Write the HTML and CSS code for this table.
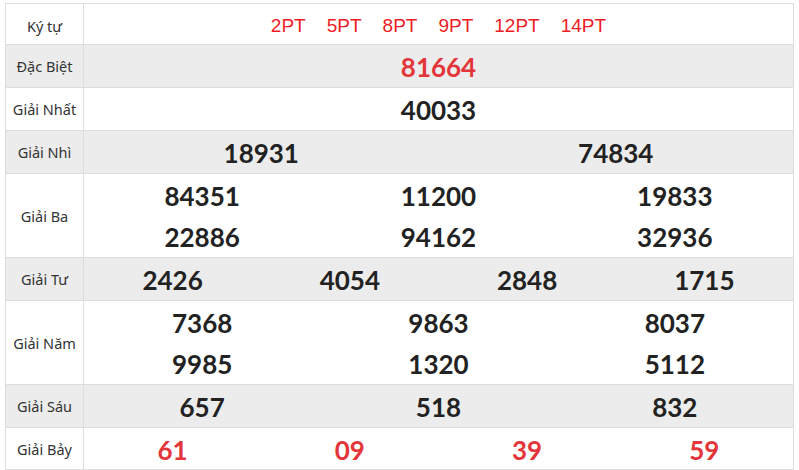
FILE: index.html
```html
<!DOCTYPE html>
<html lang="vi">
<head>
<meta charset="utf-8">
<link rel="stylesheet" href="styles.css">
</head>
<body>
<table class="kq">
  <colgroup><col class="c-label"><col></colgroup>
  <tr class="r-head">
    <td class="lbl">Ký tự</td>
    <td class="pts"><span>2PT</span><span>5PT</span><span>8PT</span><span>9PT</span><span>12PT</span><span>14PT</span></td>
  </tr>
  <tr class="gray">
    <td class="lbl">Đặc Biệt</td>
    <td><div class="g g1"><span class="n red">81664</span></div></td>
  </tr>
  <tr>
    <td class="lbl">Giải Nhất</td>
    <td><div class="g g1"><span class="n">40033</span></div></td>
  </tr>
  <tr class="gray">
    <td class="lbl">Giải Nhì</td>
    <td><div class="g g2"><span class="n">18931</span><span class="n">74834</span></div></td>
  </tr>
  <tr class="dbl">
    <td class="lbl">Giải Ba</td>
    <td><div class="g g3"><span class="n">84351</span><span class="n">11200</span><span class="n">19833</span><span class="n">22886</span><span class="n">94162</span><span class="n">32936</span></div></td>
  </tr>
  <tr class="gray">
    <td class="lbl">Giải Tư</td>
    <td><div class="g g4"><span class="n">2426</span><span class="n">4054</span><span class="n">2848</span><span class="n">1715</span></div></td>
  </tr>
  <tr class="dbl">
    <td class="lbl">Giải Năm</td>
    <td><div class="g g3"><span class="n">7368</span><span class="n">9863</span><span class="n">8037</span><span class="n">9985</span><span class="n">1320</span><span class="n">5112</span></div></td>
  </tr>
  <tr class="gray">
    <td class="lbl">Giải Sáu</td>
    <td><div class="g g3"><span class="n">657</span><span class="n">518</span><span class="n">832</span></div></td>
  </tr>
  <tr class="last">
    <td class="lbl">Giải Bảy</td>
    <td><div class="g g4"><span class="n red">61</span><span class="n red">09</span><span class="n red">39</span><span class="n red">59</span></div></td>
  </tr>
</table>
</body>
</html>
```
FILE: styles.css
```css
html, body {
  margin: 0;
  padding: 0;
  background: #ffffff;
}
body {
  padding: 3px 0 0 5px;
  font-family: "Noto Sans", sans-serif;
}
.kq {
  border-collapse: collapse;
  width: 789px;
  table-layout: fixed;
}
.c-label { width: 78px; }
.kq td {
  border: 1px solid #dddddd;
  padding: 0;
  text-align: center;
  vertical-align: middle;
  height: 42px;
}
.kq tr.r-head td { height: 37px; padding-top: 3px; }
.kq tr.dbl td { height: 83px; }
.kq tr.last td { height: 41px; }
.kq tr.gray td { background: #ececec; }
.lbl {
  font-size: 14.5px;
  color: #333333;
}
.pts {
  font-family: "Liberation Sans", Arial, sans-serif;
  font-size: 19px;
  color: #ee1c25;
}
.pts span { margin: 0 10.5px; }
.g {
  display: grid;
  align-items: center;
  justify-items: center;
}
.g1 { grid-template-columns: 1fr; }
.g2 { grid-template-columns: repeat(2, 1fr); }
.g3 { grid-template-columns: repeat(3, 1fr); }
.g4 { grid-template-columns: repeat(4, 1fr); }
.dbl .g { grid-auto-rows: 41px; }
.n {
  font-family: Lato, sans-serif;
  font-weight: 700;
  font-size: 26px;
  color: #222222;
  line-height: 1;
  padding-top: 2px;
}
.n.red { color: #e3363b; }
```
